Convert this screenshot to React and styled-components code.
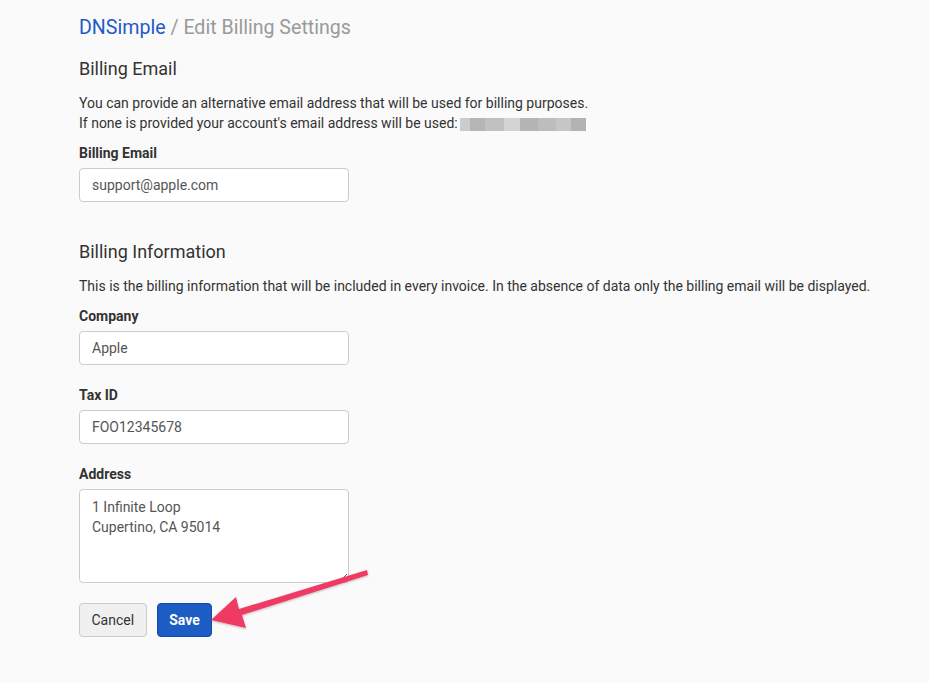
import React from 'react';
import styled, { createGlobalStyle } from 'styled-components';

const GlobalStyle = createGlobalStyle`
  html, body {
    margin: 0;
    padding: 0;
    background: #fafafa;
  }
  body {
    font-family: Roboto, "Helvetica Neue", Arial, sans-serif;
    font-size: 14px;
    color: #333;
  }
`;

const Page = styled.div`
  position: relative;
  width: 929px;
  height: 682px;
  box-sizing: border-box;
  padding: 17px 0 0 79px;
`;

const Title = styled.h1`
  margin: 0 0 20px;
  font-size: 19.6px;
  line-height: 22px;
  font-weight: 400;
  color: #999;
`;

const Brand = styled.span`
  color: #1f5bc6;
`;

const Heading = styled.h3`
  margin: 0 0 14px;
  font-size: 18px;
  line-height: 20px;
  font-weight: 400;
  color: #333;
  margin-top: ${(p) => (p.$spaced ? '40px' : '0')};
`;

const Text = styled.p`
  margin: 0 0 10px;
  line-height: 20px;
`;

const Masked = styled.span`
  display: inline-block;
  vertical-align: middle;
  width: 126px;
  height: 13px;
  margin-left: -1px;
  background: linear-gradient(
    90deg,
    #c4c4c4 0 8%,
    #a9a9a9 8% 20%,
    #b6b6b6 20% 35%,
    #cdcdcd 35% 48%,
    #a8a8a8 48% 62%,
    #b2b2b2 62% 76%,
    #bdbdbd 76% 88%,
    #a6a6a6 88% 100%
  );
  opacity: 0.85;
`;

const Group = styled.div`
  margin-bottom: 20px;
`;

const Label = styled.label`
  display: block;
  font-weight: 700;
  line-height: 20px;
  margin-bottom: 5px;
  color: #333;
`;

const Input = styled.input`
  display: block;
  box-sizing: border-box;
  width: 270px;
  height: 34px;
  padding: 6px 12px;
  border: 1px solid #ccc;
  border-radius: 4px;
  background: #fff;
  font-family: inherit;
  font-size: 14px;
  color: #555;
  outline: none;
`;

const Area = styled.textarea`
  display: block;
  box-sizing: border-box;
  width: 270px;
  height: 94px;
  padding: 7px 12px;
  border: 1px solid #ccc;
  border-radius: 4px;
  background: #fff;
  font-family: inherit;
  font-size: 14px;
  line-height: 20px;
  color: #555;
  outline: none;
  resize: vertical;
`;

const Actions = styled.div`
  display: flex;
  gap: 10px;
`;

const Button = styled.button`
  box-sizing: border-box;
  height: 34px;
  padding: 0 11.5px;
  border-radius: 4px;
  font-family: inherit;
  font-size: 14px;
  border: 1px solid ${(p) => (p.$primary ? '#17499f' : '#ccc')};
  background: ${(p) => (p.$primary ? '#1c5cc5' : '#f0f0f0')};
  color: ${(p) => (p.$primary ? '#fff' : '#333')};
  font-weight: ${(p) => (p.$primary ? 700 : 400)};
`;

const Overlay = styled.svg`
  position: absolute;
  left: 0;
  top: 0;
  pointer-events: none;
`;

const Arrow = () => (
  <Overlay width="929" height="682" viewBox="0 0 929 682">
    <defs>
      <filter id="sh" x="-10%" y="-10%" width="120%" height="130%">
        <feDropShadow dx="0" dy="1" stdDeviation="1" floodColor="#000" floodOpacity="0.25" />
      </filter>
    </defs>
    <polygon
      filter="url(#sh)"
      fill="#ef3a63"
      points="367,570 368,575 242,615 246,628 211,620 236,597 239,609"
    />
  </Overlay>
);

export default function App() {
  return (
    <Page>
      <GlobalStyle />
      <Title>
        <Brand>DNSimple</Brand> / Edit Billing Settings
      </Title>

      <Heading>Billing Email</Heading>
      <Text>
        You can provide an alternative email address that will be used for billing purposes.
        <br />
        If none is provided your account's email address will be used: <Masked />
      </Text>
      <Group>
        <Label>Billing Email</Label>
        <Input defaultValue="support@apple.com" />
      </Group>

      <Heading $spaced>Billing Information</Heading>
      <Text>
        This is the billing information that will be included in every invoice. In the absence of
        data only the billing email will be displayed.
      </Text>
      <Group>
        <Label>Company</Label>
        <Input defaultValue="Apple" />
      </Group>
      <Group>
        <Label>Tax ID</Label>
        <Input defaultValue="FOO12345678" />
      </Group>
      <Group>
        <Label>Address</Label>
        <Area defaultValue={'1 Infinite Loop\nCupertino, CA 95014'} />
      </Group>
      <Actions>
        <Button>Cancel</Button>
        <Button $primary>Save</Button>
      </Actions>
      <Arrow />
    </Page>
  );
}
